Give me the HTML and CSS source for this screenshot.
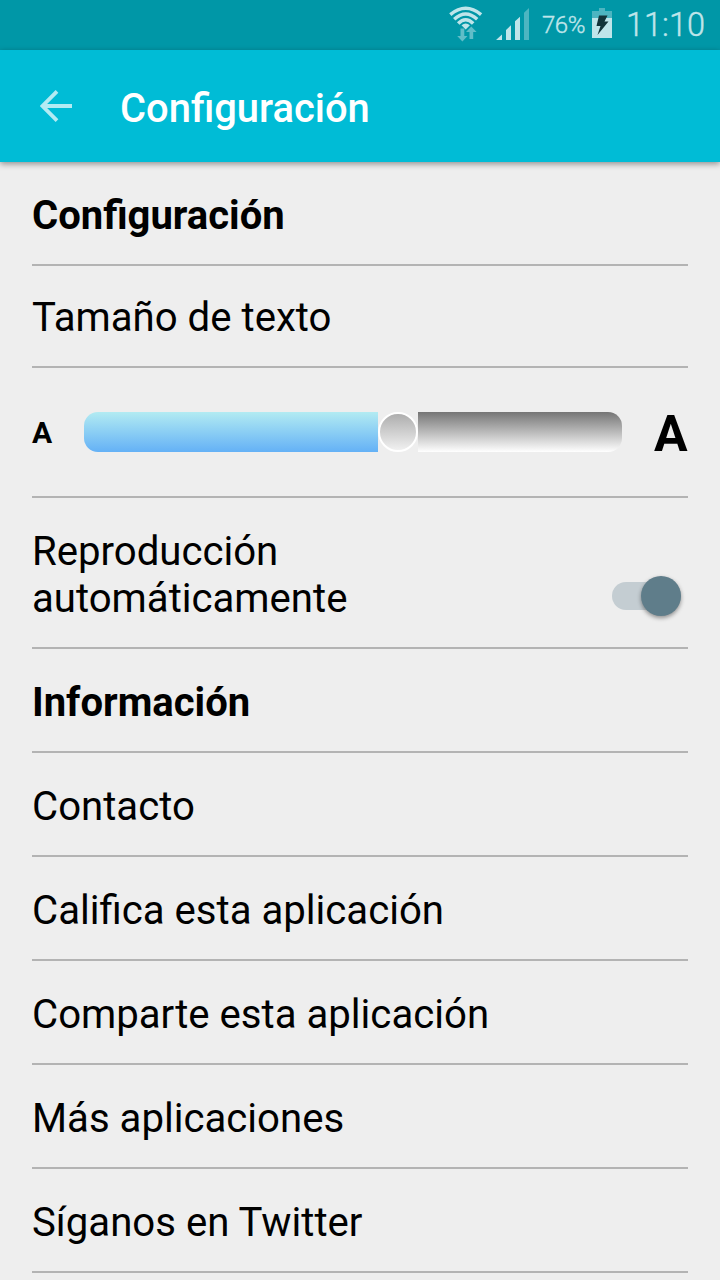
FILE: index.html
```html
<!DOCTYPE html>
<html lang="es">
<head>
<meta charset="utf-8">
<title>Configuración</title>
<link rel="stylesheet" href="styles.css">
</head>
<body>
<div class="screen">
  <div class="status">
    <svg class="wifi" width="34" height="36" viewBox="0 0 34 36">
      <g fill="none" stroke="#bfe5ea" stroke-width="3.500">
        <path d="M1.300 8.600Q16.700 -4 32.100 8.600"/>
        <path d="M5.200 13.200Q16.700 2.800 28.200 13.200"/>
        <path d="M9.200 17.600Q16.700 10 24.200 17.600"/>
      </g>
      <path d="M12.500 19.300Q16.700 15.500 20.900 19.300L16.700 23.500Z" fill="#bfe5ea"/>
      <path d="M11.500 22.500h3.800v7.500h3.200L13.400 35.500 8.200 30h3.300z" fill="#60bdc8"/>
      <path d="M20.500 33v-7h-3.500L22.300 20.500 27.600 26h-3.400v7z" fill="#60bdc8"/>
    </svg>
    <svg class="signal" width="34" height="33" viewBox="0 0 34 33">
      <path d="M0 32L6 26.500V32ZM10 32V22L15 17.300V32ZM19 32V13.200L24 8.700V32Z" fill="#bfe5ea"/>
      <path d="M28 32V4.700L33 0V32Z" fill="#4db5c1"/>
    </svg>
    <span class="percent">76%</span>
    <svg class="battery" width="20" height="30" viewBox="0 0 20 30">
      <path d="M7 0h6v3h7v7H0V3h7z" fill="#4db5c1"/>
      <path d="M0 10h20v20H0z" fill="#bfe5ea"/>
      <path d="M7 7.500h8.500L12.500 13.500H16.500L5.500 27 8.500 18H4.500z" fill="#12343a"/>
    </svg>
    <span class="clock">11:10</span>
  </div>
  <header class="toolbar">
    <svg class="back" width="32" height="32" viewBox="0 0 32 32">
      <path d="M32 16H3M17 1.400L2.500 16 17 30.600" fill="none" stroke="#b3ebf3" stroke-width="3.800"/>
    </svg>
    <h1 class="title">Configuración</h1>
  </header>
  <main class="list">
    <h2 class="row heading">Configuración</h2>
    <div class="row size-label">Tamaño de texto</div>
    <div class="row slider-row">
      <span class="small-a">A</span>
      <div class="slider">
        <div class="filled"></div>
        <div class="knob"></div>
        <div class="rest"></div>
      </div>
      <span class="big-a">A</span>
    </div>
    <div class="row autoplay">
      <span class="autoplay-text">Reproducción automáticamente</span>
      <div class="switch"><div class="thumb"></div></div>
    </div>
    <h2 class="row heading">Información</h2>
    <div class="row">Contacto</div>
    <div class="row">Califica esta aplicación</div>
    <div class="row">Comparte esta aplicación</div>
    <div class="row">Más aplicaciones</div>
    <div class="row">Síganos en Twitter</div>
  </main>
</div>
</body>
</html>
```
FILE: styles.css
```css
* { box-sizing: border-box; }
body {
  margin: 0;
  background: #eee;
  color: #000;
  font-family: Roboto, sans-serif;
}
.screen {
  width: 720px;
  height: 1280px;
  overflow: hidden;
  display: flex;
  flex-direction: column;
}
.status {
  height: 50px;
  flex: none;
  background: #0097a7;
  color: #bfe5ea;
  display: flex;
  align-items: flex-start;
  padding-left: 449px;
}
.wifi { margin-top: 6px; flex: none; }
.signal { margin: 8px 0 0 13px; flex: none; }
.percent {
  width: 50px;
  margin: 11px 0 0 12px;
  font-size: 24px;
  line-height: 28px;
  font-weight: 300;
  letter-spacing: -0.5px;
  -webkit-text-stroke: 0.4px #bfe5ea;
}
.battery { margin-top: 8px; flex: none; }
.clock {
  margin: 6px 0 0 14px;
  font-size: 32.5px;
  line-height: 38px;
  font-weight: 300;
  -webkit-text-stroke: 0.4px #bfe5ea;
}
.toolbar {
  height: 112px;
  flex: none;
  background: #00bcd6;
  display: flex;
  align-items: center;
  padding: 0 40px;
  gap: 48px;
  box-shadow: 0 2px 6px rgba(0, 0, 0, 0.4);
}
.back { flex: none; }
.title {
  margin: 5px 0 0;
  color: #fff;
  font-size: 39.9px;
  line-height: 47px;
  font-weight: 500;
}
.list { padding: 0 32px; }
.row {
  height: 104px;
  margin: 0;
  padding-top: 30px;
  border-bottom: 2px solid #b3b3b3;
  font-size: 40.15px;
  line-height: 47px;
  font-weight: 400;
}
.heading { font-size: 40px; font-weight: 700; }
.size-label { height: 102px; padding-top: 28px; }
.slider-row {
  height: 130px;
  padding: 0;
  display: flex;
  align-items: center;
  font-weight: 700;
}
.small-a { width: 52px; font-size: 30px; }
.slider {
  width: 538px;
  height: 40px;
  display: flex;
  border-radius: 14px;
  overflow: hidden;
}
.filled { width: 294px; background: linear-gradient(#b2ebf2, #64b1f6); }
.knob {
  width: 40px;
  height: 40px;
  border: 2px solid #fff;
  border-radius: 50%;
  background: linear-gradient(#aaa, #f4f4f4) border-box;
}
.rest { flex: 1; background: linear-gradient(#757575, #fff); }
.big-a { margin-left: 32px; padding-top: 4px; font-size: 50px; }
.autoplay {
  height: 151px;
  display: flex;
  justify-content: space-between;
}
.autoplay-text { width: 400px; }
.switch {
  width: 69px;
  height: 28px;
  margin: 54px 7px 0 0;
  display: flex;
  align-items: center;
  justify-content: flex-end;
  border-radius: 14px;
  background: #c4cdd2;
}
.thumb {
  width: 40px;
  height: 40px;
  flex: none;
  border-radius: 50%;
  background: #5f7d8a;
  box-shadow: 0 2px 4px rgba(0, 0, 0, 0.4);
}
```
